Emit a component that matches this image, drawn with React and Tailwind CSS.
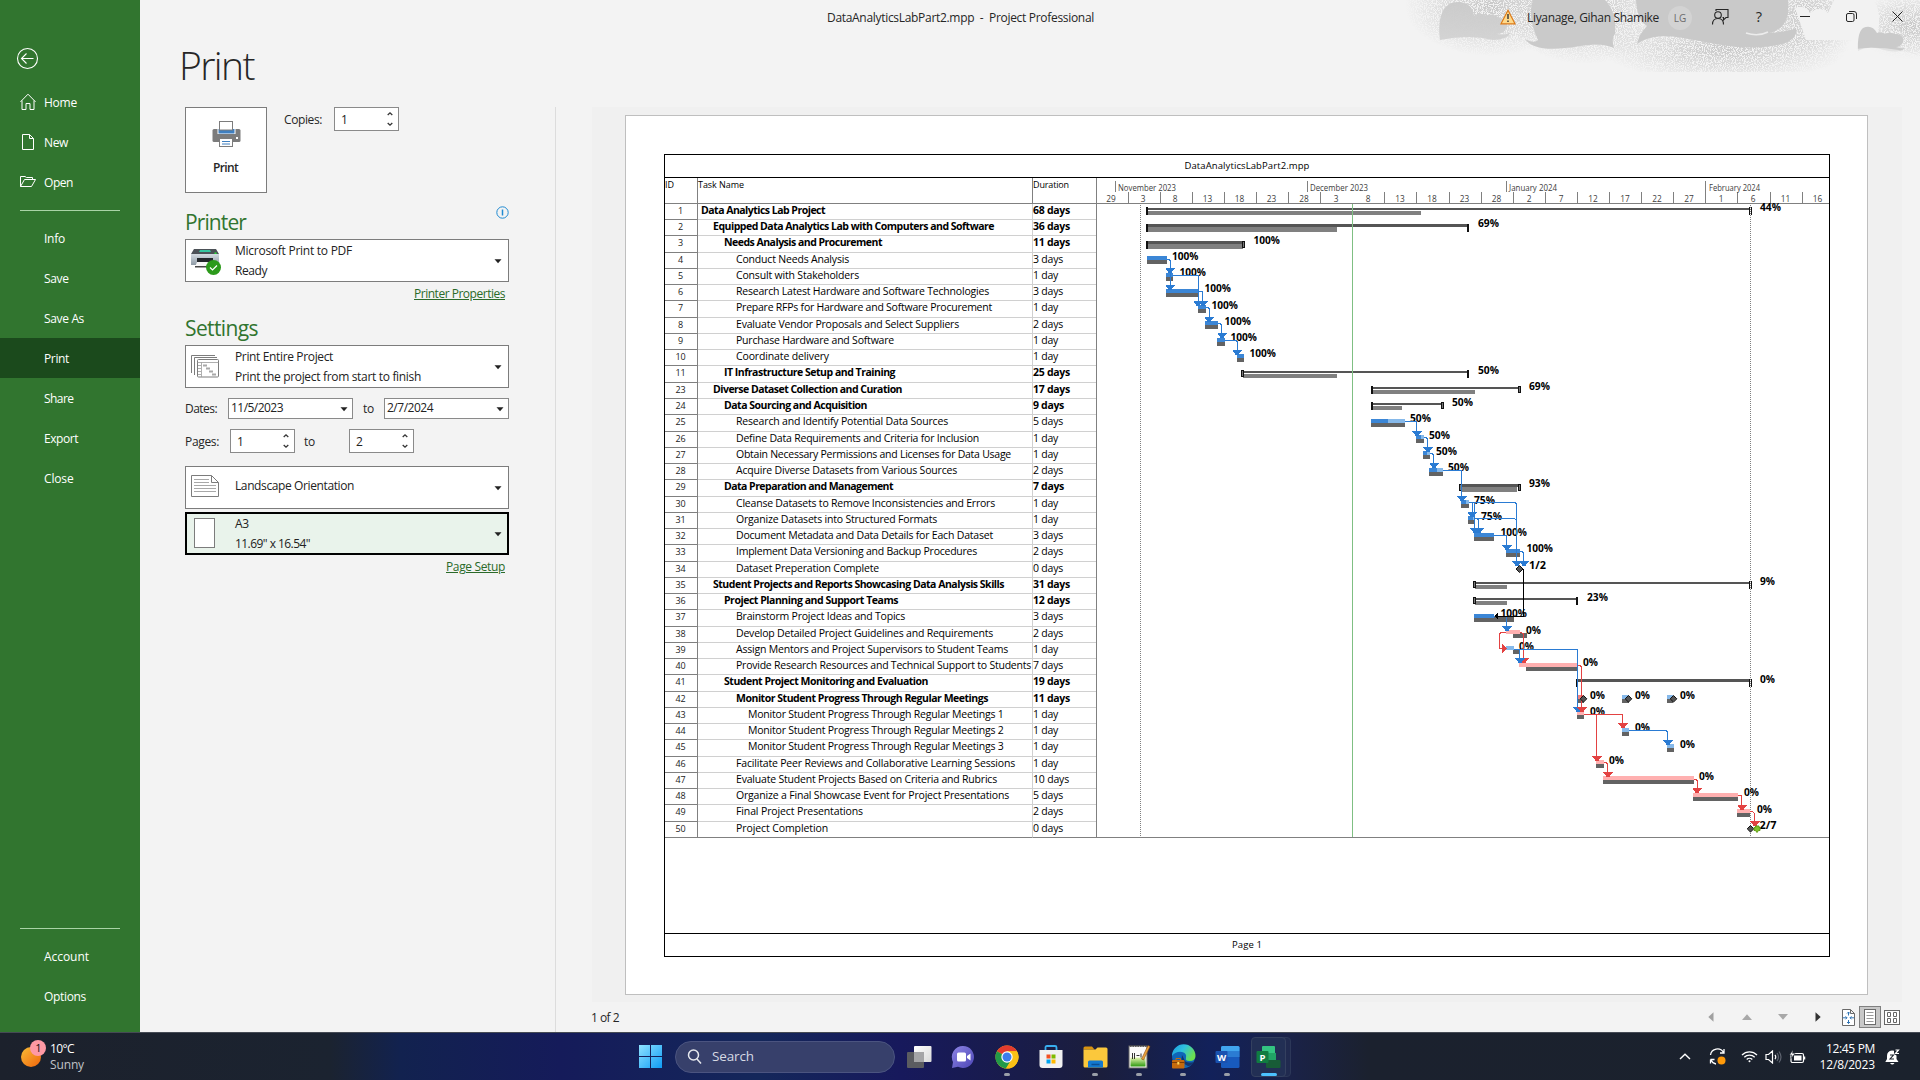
import { useLayoutEffect, useRef } from "react";

/* Text whose tracking is adjusted so that it fills a given width. */
function Fit({ w, className = "", children }) {
  const ref = useRef(null);
  useLayoutEffect(() => {
    const el = ref.current;
    el.style.letterSpacing = "0px";
    const natural = el.getBoundingClientRect().width;
    el.style.letterSpacing = `${(w - natural) / el.textContent.length}px`;
  }, [w, children]);
  return (
    <span ref={ref} className={`inline-block whitespace-pre ${className}`}>
      {children}
    </span>
  );
}

/* ---------- Sidebar ---------- */

const stroke = { fill: "none", stroke: "#fff", strokeWidth: 1 };

const HomeIcon = () => (
  <svg width="16" height="18" viewBox="0 0 16 18" {...stroke}>
    <path d="M.5 8.800 8 1.200l7.500 7.600M2 7.500v9h4v-6h4v6h4v-9" />
  </svg>
);
const NewIcon = () => (
  <svg width="16" height="18" viewBox="0 0 16 18" {...stroke}>
    <path d="M2.500 1.500h7l4 4v11h-11zM9.500 1.500v4h4" />
  </svg>
);
const OpenIcon = () => (
  <svg width="16" height="18" viewBox="0 0 16 18" {...stroke}>
    <path d="M.5 13.500v-10h4.500l1.500 1h6v2M.5 13.500h11l4-7h-11z" />
  </svg>
);

function SideItem({ label, w, icon, active }) {
  return (
    <div className={`flex h-10 items-center pl-5 ${active ? "bg-[#1b4a1c]" : ""}`}>
      <span className="flex w-6 items-center">{icon}</span>
      <Fit w={w} className="pt-px">{label}</Fit>
    </div>
  );
}

function Sidebar() {
  return (
    <aside className="flex w-[140px] flex-col bg-[#31752f] text-[12px] font-medium text-white">
      <div className="flex h-[82px] items-end pb-[12px] pl-[16px]">
        <svg width="23" height="23" viewBox="0 0 23 23" fill="none" stroke="#fff" strokeWidth="1.100">
          <circle cx="11.500" cy="11.500" r="10" />
          <path d="M17.500 11.500h-12M10.500 6.500l-5 5 5 5" />
        </svg>
      </div>
      <SideItem label="Home" w={33} icon={<HomeIcon />} />
      <SideItem label="New" w={24} icon={<NewIcon />} />
      <SideItem label="Open" w={29} icon={<OpenIcon />} />
      <div className="mx-5 mt-2 mb-[7px] h-px bg-[#a9d3a6]" />
      <SideItem label="Info" w={21} />
      <SideItem label="Save" w={24.5} />
      <SideItem label="Save As" w={40} />
      <SideItem label="Print" w={25} active />
      <SideItem label="Share" w={29.5} />
      <SideItem label="Export" w={34} />
      <SideItem label="Close" w={29.5} />
      <div className="mx-5 mt-auto mb-[7px] h-px bg-[#a9d3a6]" />
      <SideItem label="Account" w={45} />
      <SideItem label="Options" w={42} />
      <div className="h-[16px]" />
    </aside>
  );
}

/* ---------- Title bar ---------- */

function CloudArt() {
  return (
    <svg className="absolute top-0 right-0" width="520" height="72" viewBox="0 0 520 72">
      <defs>
        <filter id="grain" x="0" y="0" width="100%" height="100%" colorInterpolationFilters="sRGB">
          <feTurbulence type="fractalNoise" baseFrequency="0.9" numOctaves="2" seed="4" result="n" />
          <feColorMatrix in="n" type="matrix" values="0 0 0 0 .76  0 0 0 0 .76  0 0 0 0 .76  0 0 0 -7 4.2" result="d" />
          <feComposite in="d" in2="SourceGraphic" operator="in" />
        </filter>
        <radialGradient id="haze">
          <stop offset="0" stopColor="#000" stopOpacity=".9" />
          <stop offset=".55" stopColor="#000" stopOpacity=".45" />
          <stop offset="1" stopColor="#000" stopOpacity="0" />
        </radialGradient>
        <linearGradient id="cloud" x1="0" y1="0" x2="0" y2="1">
          <stop offset="0" stopColor="#cacaca" />
          <stop offset="1" stopColor="#d2d2d2" />
        </linearGradient>
      </defs>
      <g filter="url(#grain)">
        <rect width="520" height="72" fill="none" />
        <ellipse cx="90" cy="6" rx="85" ry="50" fill="url(#haze)" />
        <ellipse cx="185" cy="12" rx="80" ry="52" fill="url(#haze)" />
        <ellipse cx="325" cy="48" rx="125" ry="34" fill="url(#haze)" />
        <ellipse cx="405" cy="14" rx="60" ry="44" fill="url(#haze)" />
        <ellipse cx="512" cy="26" rx="60" ry="34" fill="url(#haze)" />
      </g>
      <path d="M395 8q10-4 15 5q10-8 18 0l6-13h40q8 14 4 32l-22 8h-50z" fill="#f2f2f2" />
      <path d="M40 40C37 15 44 2 58 2q14 0 16 14q5-5 11 0q8-4 14 2q8 0 8 8q-2 8-10 8q8 2 14-2q-4 8-18 8q-24-6-53 0z" fill="url(#cloud)" opacity=".95" />
      <path d="M133 0h72q12 12 10 34q-4 4-1 14q-13-6-34-2q-45 8-55-7q9 5 13 1q-11-24-5-40z" fill="#cacaca" />
      <path d="M236 0h152v14q-3 15-18 19q17-1 26-5q2 8-8 14q-18 7-50 5c-45-4-76-20-101-3q2-10 10-18q-10-6-11-26z" fill="#c9c9c9" />
      <path d="M346 33q12 4 22-1" fill="none" stroke="#ececec" strokeWidth="1.500" />
      <path d="M458 51q-1-18 5-23q9-4 14 5q5-2 8 1q5-3 9 0q10-1 9 8q-2 5-7 5q5 2 9 1q-5 6-21 2q-15-5-26 1z" fill="#cacaca" />
      <path d="M438 71v-18q40-12 82 3v15z" fill="#f3f3f3" opacity=".6" />
    </svg>
  );
}

function TitleBar() {
  return (
    <div className="relative flex h-9 items-center text-[12px] text-[#262626]">
      <div className="w-[687px]" />
      <Fit w={267}>{"DataAnalyticsLabPart2.mpp  -  Project Professional"}</Fit>
      <div className="ml-auto flex items-center">
        <svg className="-mt-[2px]" width="16" height="16" viewBox="0 0 16 16">
          <path d="M8 1.300 15 14.800H1z" fill="#ffd98a" stroke="#dd7a16" strokeWidth="1.200" />
          <path d="M8 5v5M8 11.500v1.600" stroke="#333" strokeWidth="1.400" />
        </svg>
        <Fit w={132} className="ml-[11px]">Liyanage, Gihan Shamike</Fit>
        <span className="ml-[9px] flex h-6 w-6 items-center justify-center rounded-full bg-[#d3d3d3] text-[10px] text-[#6b6b6b]">LG</span>
        <svg className="-mt-[3px] ml-[19px]" width="18" height="17" viewBox="0 0 18 17" fill="none" stroke="#262626" strokeWidth="1.100">
          <path d="M5 3V1.500h12v8h-2l-2.500 2.500v-2.500h-1M1.500 16.500q0-6 5.500-6t5.500 6" />
          <circle cx="7" cy="7" r="3.300" />
        </svg>
        <span className="-mt-[2px] ml-[24px] w-[12px] text-center text-[14.500px]">?</span>
        <svg className="-mt-1 ml-[35px]" width="10" height="10" viewBox="0 0 10 10"><path d="M0 5.500h10" stroke="#262626" /></svg>
        <svg className="-mt-1 ml-[36px]" width="11" height="11" viewBox="0 0 11 11" fill="none" stroke="#262626">
          <rect x=".5" y="2.500" width="7.500" height="8" rx="1.500" />
          <path d="M3 .5h5q2.500 0 2.500 2.500v5" />
        </svg>
        <svg className="-mt-1 mr-[17px] ml-[35px]" width="11" height="11" viewBox="0 0 11 11"><path d="M.5.5l10 10M10.500.5l-10 10" stroke="#262626" /></svg>
      </div>
    </div>
  );
}

/* ---------- Print settings ---------- */

const Caret = ({ className = "" }) => (
  <svg className={className} width="8" height="5" viewBox="0 0 8 5"><path d="M.5.3h7L4 4.300z" fill="#222" /></svg>
);

function Spinner({ value }) {
  return (
    <div className="flex h-6 w-[65px] items-center justify-between border border-[#8a8a8a] bg-white pr-[5px] pl-[6px] text-[12px] text-[#222]">
      <span className="pt-px">{value}</span>
      <svg width="6" height="16" viewBox="0 0 6 16" fill="none" stroke="#333" strokeWidth="1.300">
        <path d="M.7 4 3 1.800l2.300 2.200M.7 12 3 14.200l2.300-2.200" />
      </svg>
    </div>
  );
}

function DateBox({ value, w }) {
  return (
    <div className="flex h-[21px] w-[125px] items-center justify-between border border-[#8a8a8a] bg-white pr-[4px] pl-[2px] text-[12px] text-[#222]">
      <Fit w={w} className="-mt-[2px]">{value}</Fit>
      <Caret className="mt-px" />
    </div>
  );
}

function Dropdown({ icon, lines, focused }) {
  return (
    <div
      className={`flex h-[43px] items-center text-[12px] text-[#222] ${
        focused ? "border-2 border-black bg-[#e9f3eb] pr-[5px] pl-[4px]" : "border border-[#7c7c7c] bg-white pr-[6px] pl-[5px]"
      }`}
    >
      <span className="flex w-[44px] items-center">{icon}</span>
      <span className={`flex flex-col items-start ${lines.length === 1 ? "-mt-[3px]" : ""}`}>
        {lines.map(([t, w]) => (
          <Fit key={t} w={w} className="h-5 leading-5">{t}</Fit>
        ))}
      </span>
      <Caret className="mt-[2px] ml-auto" />
    </div>
  );
}

const BigPrinter = () => (
  <svg width="29" height="26" viewBox="0 0 29 26">
    <rect x=".5" y="8" width="28" height="13" rx="1.500" fill="#7c7c7c" />
    <rect x="5.500" y="7" width="18" height="6" fill="#fff" />
    <rect x="6.500" y="8" width="16" height="4.500" fill="#3f7fbf" />
    <rect x="7.500" y=".5" width="13" height="8.500" fill="#fff" stroke="#7c7c7c" />
    <rect x="7.500" y="17.500" width="13" height="8" fill="#fff" stroke="#7c7c7c" />
    <path d="M10 20.500h8M10 23h8" stroke="#3f7fbf" />
    <rect x="24" y="16" width="2" height="2" fill="#fff" />
  </svg>
);

const DevicePrinter = () => (
  <svg width="31" height="28" viewBox="0 0 31 28">
    <defs>
      <linearGradient id="dp" x1="0" y1="0" x2="0" y2="1">
        <stop offset="0" stopColor="#d5dce2" />
        <stop offset="1" stopColor="#8e9aa5" />
      </linearGradient>
    </defs>
    <path d="M3 2h22l3 5H0z" fill="#4c5157" />
    <path d="M9 3h10l1 2H8z" fill="#35c6a0" />
    <path d="M0 7h28v11H0z" fill="url(#dp)" />
    <path d="M6 11h16v6H6z" fill="#23272b" />
    <path d="M6 15h16l2 5H4z" fill="#f7f7f7" />
    <path d="M4 19h19v1.500H4z" fill="#444" />
    <rect x="23.500" y="5.500" width="2" height="1.500" fill="#2ce03a" />
    <circle cx="22.500" cy="20.500" r="7.500" fill="#2c9a1b" />
    <path d="M19 20.500l2.500 2.500 4.500-4.500" fill="none" stroke="#fff" strokeWidth="1.200" />
  </svg>
);

const ProjectPages = () => (
  <svg width="28" height="23" viewBox="0 0 28 23" fill="none" stroke="#7c7c7c">
    <path d="M.5 18V.5H24M3.500 20V2.500H26" />
    <rect x="6.500" y="4.500" width="21" height="17.500" rx="1" fill="#fff" />
    <path d="M6.500 7.500h21M10.500 7.500V22M7 10.500h3M7 13.500h3M7 16.500h3M7 19.500h3" strokeWidth=".8" stroke="#9a9a9a" />
    <path d="M12 10.500h4M15 13.500h4M18 16.500h4M21 19.500h4" stroke="#a8a8a8" strokeWidth="2" />
  </svg>
);

const LandscapePage = () => (
  <svg className="-mt-[4px]" width="28" height="22" viewBox="0 0 28 22" fill="none" stroke="#7c7c7c">
    <path d="M.5.5h20l7 7v14H.5zM20.500.5v7h7" fill="#fff" />
    <path d="M3 4.500h15M3 7.500h15M3 10.500h22M3 13.500h22M3 16.500h22" stroke="#a8a8a8" />
  </svg>
);

function Settings() {
  return (
    <section className="flex w-[416px] flex-col border-r border-[#dcdcdc] pr-[46px] pl-[45px] text-[12px] text-[#262626]">
      <div className="flex h-[86px]">
        <div className="flex w-[82px] flex-col items-center border border-[#7c7c7c] bg-white pt-[13px]">
          <BigPrinter />
          <Fit w={25} className="mt-[12px] mr-px font-semibold">Print</Fit>
        </div>
        <div className="ml-[17px] flex h-6 items-center">
          <Fit w={38} className="mr-[12px] pt-[2px]">Copies:</Fit>
          <Spinner value="1" />
        </div>
      </div>
      <div className="mt-[10px] flex h-9 items-center justify-between text-[#31752f]">
        <Fit w={61} className="pt-[3px] text-[21px]">Printer</Fit>
        <svg className="-mt-[18px]" width="13" height="13" viewBox="0 0 13 13" fill="none" stroke="#1f8ad2">
          <circle cx="6.500" cy="6.500" r="5.700" />
          <path d="M6.500 3.500v6" strokeWidth="1.500" />
        </svg>
      </div>
      <Dropdown icon={<DevicePrinter />} lines={[["Microsoft Print to PDF", 117], ["Ready", 32]]} />
      <div className="flex h-6 items-center justify-end pr-1 text-[#2b6a29] underline"><Fit w={91}>Printer Properties</Fit></div>
      <div className="flex h-[39px] items-center pt-[6px] text-[21px] text-[#31752f]"><Fit w={73}>Settings</Fit></div>
      <Dropdown icon={<ProjectPages />} lines={[["Print Entire Project", 98], ["Print the project from start to finish", 186]]} />
      <div className="mt-[10px] flex h-[21px] items-center">
        <Fit w={32} className="mr-[11px] pt-px">Dates:</Fit>
        <DateBox value="11/5/2023" w={52} />
        <Fit w={11} className="mx-[10px] pt-px">to</Fit>
        <DateBox value="2/7/2024" w={46} />
      </div>
      <div className="mt-[10px] flex h-6 items-center">
        <Fit w={34} className="mr-[11px] pt-[2px]">Pages:</Fit>
        <Spinner value="1" />
        <Fit w={11} className="mr-[34px] ml-[9px] pt-[2px]">to</Fit>
        <Spinner value="2" />
      </div>
      <div className="mt-[13px]"><Dropdown icon={<LandscapePage />} lines={[["Landscape Orientation", 119]]} /></div>
      <div className="mt-[3px]">
        <Dropdown
          focused
          icon={<span className="-mt-px ml-[3px] h-[30px] w-[21px] border border-[#7c7c7c] bg-white" />}
          lines={[["A3", 14], ['11.69" x 16.54"', 75]]}
        />
      </div>
      <div className="flex h-6 items-center justify-end pr-1 text-[#2b6a29] underline"><Fit w={59}>Page Setup</Fit></div>
    </section>
  );
}

/* ---------- Task table ---------- */

// [id, outline level, name, text width, duration, bold]
const TASKS = [
  [1, 0, "Data Analytics Lab Project", 124, "68 days", 1],
  [2, 1, "Equipped Data Analytics Lab with Computers and Software", 281, "36 days", 1],
  [3, 2, "Needs Analysis and Procurement", 158, "11 days", 1],
  [4, 3, "Conduct Needs Analysis", 113, "3 days"],
  [5, 3, "Consult with Stakeholders", 123, "1 day"],
  [6, 3, "Research Latest Hardware and Software Technologies", 253, "3 days"],
  [7, 3, "Prepare RFPs for Hardware and Software Procurement", 256, "1 day"],
  [8, 3, "Evaluate Vendor Proposals and Select Suppliers", 223, "2 days"],
  [9, 3, "Purchase Hardware and Software", 158, "1 day"],
  [10, 3, "Coordinate delivery", 93, "1 day"],
  [11, 2, "IT Infrastructure Setup and Training", 171, "25 days", 1],
  [23, 1, "Diverse Dataset Collection and Curation", 189, "17 days", 1],
  [24, 2, "Data Sourcing and Acquisition", 143, "9 days", 1],
  [25, 3, "Research and Identify Potential Data Sources", 212, "5 days"],
  [26, 3, "Define Data Requirements and Criteria for Inclusion", 243, "1 day"],
  [27, 3, "Obtain Necessary Permissions and Licenses for Data Usage", 275, "1 day"],
  [28, 3, "Acquire Diverse Datasets from Various Sources", 221, "2 days"],
  [29, 2, "Data Preparation and Management", 169, "7 days", 1],
  [30, 3, "Cleanse Datasets to Remove Inconsistencies and Errors", 259, "1 day"],
  [31, 3, "Organize Datasets into Structured Formats", 201, "1 day"],
  [32, 3, "Document Metadata and Data Details for Each Dataset", 257, "3 days"],
  [33, 3, "Implement Data Versioning and Backup Procedures", 241, "2 days"],
  [34, 3, "Dataset Preperation Complete", 143, "0 days"],
  [35, 1, "Student Projects and Reports Showcasing Data Analysis Skills", 291, "31 days", 1],
  [36, 2, "Project Planning and Support Teams", 174, "12 days", 1],
  [37, 3, "Brainstorm Project Ideas and Topics", 169, "3 days"],
  [38, 3, "Develop Detailed Project Guidelines and Requirements", 257, "2 days"],
  [39, 3, "Assign Mentors and Project Supervisors to Student Teams", 272, "1 day"],
  [40, 3, "Provide Research Resources and Technical Support to Students", 295, "7 days"],
  [41, 2, "Student Project Monitoring and Evaluation", 204, "19 days", 1],
  [42, 3, "Monitor Student Progress Through Regular Meetings", 252, "11 days", 1],
  [43, 4, "Monitor Student Progress Through Regular Meetings 1", 255.5, "1 day"],
  [44, 4, "Monitor Student Progress Through Regular Meetings 2", 255.5, "1 day"],
  [45, 4, "Monitor Student Progress Through Regular Meetings 3", 255.5, "1 day"],
  [46, 3, "Facilitate Peer Reviews and Collaborative Learning Sessions", 279, "1 day"],
  [47, 3, "Evaluate Student Projects Based on Criteria and Rubrics", 261, "10 days"],
  [48, 3, "Organize a Final Showcase Event for Project Presentations", 273, "5 days"],
  [49, 3, "Final Project Presentations", 127, "2 days"],
  [50, 3, "Project Completion", 92, "0 days"],
];

const INDENT = ["pl-[3px]", "pl-[15px]", "pl-[26px]", "pl-[38px]", "pl-[50px]"];
const rowLine = (i) => Math.floor(i * 16.2564 + 0.42);

function durationWidth(text, bold) {
  if (text.length === 5) return 25;
  if (text.length === 6) return bold ? 31 : 30;
  return bold ? 37 : 36;
}

function TaskTable() {
  return (
    <div className="flex w-[432px] flex-col border-r border-[#808080] text-black">
      <div className="flex h-[26px] border-b border-[#808080] text-[9px] leading-[13px]">
        <div className="w-[33px] border-r border-[#808080]"><Fit w={9}>ID</Fit></div>
        <div className="w-[335px] border-r border-[#808080]"><Fit w={46}>Task Name</Fit></div>
        <div><Fit w={36}>Duration</Fit></div>
      </div>
      {TASKS.map(([id, level, name, w, duration, bold], i) => (
        <div key={id} className="flex text-[10.500px]" style={{ height: rowLine(i + 1) - rowLine(i) }}>
          <div className="flex w-[33px] justify-center border-r border-b border-[#808080] pr-px text-[9px] leading-[13px] text-[#222]">
            <Fit w={String(id).length * 5}>{id}</Fit>
          </div>
          <div className={`w-[335px] border-r border-b border-[#d0d0d0] leading-[13.500px] ${INDENT[level]} ${bold ? "font-bold" : ""} ${i === 38 ? "border-b-[#808080]" : ""}`}>
            <Fit w={w}>{name}</Fit>
          </div>
          <div className={`flex-1 border-b border-[#d0d0d0] leading-[13.500px] ${bold ? "font-bold" : ""} ${i === 38 ? "border-b-[#808080]" : ""}`}>
            <Fit w={durationWidth(duration, bold)}>{duration}</Fit>
          </div>
        </div>
      ))}
    </div>
  );
}

/* ---------- Gantt chart (chart units are page pixels) ---------- */

const BLUE = "#3b86d6";
const LIGHT = "#86b9ea";
const PINK = "#ffb0b0";
const LINK = "#2a7bd3";
const RED = "#e34242";

const TICKS = [1128, 1160, 1192, 1224, 1256, 1288, 1320, 1384, 1416, 1449, 1481, 1513, 1545, 1577, 1609, 1641, 1673, 1705, 1737, 1770, 1802];
const DAYS = [
  [1111, 29], [1143, 3], [1175, 8], [1207.5, 13], [1239.5, 18], [1271.5, 23], [1304, 28], [1336, 3], [1368, 8], [1400, 13], [1432, 18],
  [1464.5, 23], [1496.5, 28], [1529, 2], [1561, 7], [1593, 12], [1625, 17], [1657, 22], [1689, 27], [1721, 1], [1753, 6], [1785.5, 11], [1817.5, 16],
];
const MONTHS = [[1115, "November 2023", 58, 1118], [1307, "December 2023", 58, 1310], [1506, "January 2024", 48, 1509], [1705, "February 2024", 51, 1709]];

// [x1, x2, y, line height, progress end, right cap style]
const SUMMARIES = [
  [1147, 1750, 208, 2, 1421, "open"],
  [1147, 1468, 224, 3, 1337, "solid"],
  [1147, 1244, 241, 3, 1243, "box"],
  [1243, 1468, 371, 2, 1337, "solid", 1],
  [1372, 1520, 387, 2, 1475, "box"],
  [1372, 1443, 403, 2, 1402, "box"],
  [1461, 1520, 484, 3, 1517, "box", 1],
  [1475, 1750, 582, 2, 1507, "open", 1],
  [1475, 1577, 598, 2, 1507, "solid", 1],
  [1577, 1750, 679, 3, 0, "open"],
];

// [x1, x2, y, split, first colour, second colour, shadow x1, shadow x2]
const BARS = [
  [1147, 1167, 256, 1167, BLUE],
  [1166, 1173, 273, 1173, BLUE],
  [1166, 1199, 289, 1199, BLUE],
  [1198, 1206, 305, 1206, BLUE],
  [1205, 1218, 321, 1218, BLUE],
  [1217, 1225, 338, 1225, BLUE],
  [1237, 1244, 354, 1244, BLUE],
  [1371, 1405, 419, 1388, BLUE, LIGHT],
  [1416, 1424, 435, 1421, BLUE, LIGHT],
  [1423, 1430, 451, 1427, BLUE, LIGHT],
  [1429, 1443, 468, 1437, BLUE, LIGHT],
  [1461, 1469, 500, 1466, BLUE, LIGHT],
  [1468, 1474, 516, 1473, BLUE, LIGHT],
  [1474, 1494, 533, 1494, BLUE],
  [1506, 1520, 549, 1520, BLUE],
  [1474, 1494, 614, 1494, BLUE, BLUE, 1474, 1514],
  [1506, 1520, 630, 1520, PINK, PINK, 1513, 1527],
  [1506, 1514, 646, 1514, LIGHT, LIGHT, 1513, 1520],
  [1519, 1577, 663, 1577, PINK, PINK, 1526, 1578],
  [1578, 1584, 695, 1584, "#f08080"],
  [1622, 1629, 695, 1629, LIGHT],
  [1667, 1673, 695, 1673, LIGHT],
  [1577, 1584, 711, 1584, PINK],
  [1622, 1629, 728, 1629, LIGHT],
  [1667, 1674, 744, 1674, LIGHT],
  [1596, 1604, 760, 1604, PINK],
  [1603, 1694, 776, 1694, PINK],
  [1693, 1738, 793, 1738, PINK],
  [1737, 1750, 809, 1750, PINK],
];

// [path, colour, arrow x, arrow top]
const LINKS = [
  ["M1167 259.500h2l1.500 1.500V285", LINK, 1170, 268],
  ["M1170.500 285v1", LINK, 1170, 285],
  ["M1173 275.500h25.500V301", LINK, 1198, 301],
  ["M1199 291.500h3.500V301", LINK, 1202.5, 301],
  ["M1206 307.500h2l1.500 1.500V317", LINK, 1209, 317],
  ["M1218 323.500h2l1.500 1.500V333", LINK, 1222, 333],
  ["M1225 340.500h11l1.500 1.500V350", LINK, 1237, 350],
  ["M1405 421.500h11.500V431", LINK, 1416.5, 431],
  ["M1424 437.500h2l1.500 1.500V447", LINK, 1427.5, 447],
  ["M1430 453.500h2l1.500 1.500V463", LINK, 1434, 463],
  ["M1443 470.500h18.500V496", LINK, 1461.5, 496],
  ["M1469 502.500h3.500V512", LINK, 1472, 512],
  ["M1474.500 503V528", LINK, 1474.5, 528],
  ["M1474 518.500h3l1.500 1.500V528", LINK, 1479, 528],
  ["M1469 502.500h46l1.500 1.500V561", LINK, 1516.5, 561],
  ["M1474 518.500h40.500l2 1.500", LINK, 1516.5, 561],
  ["M1494 535.500h12.500V545", LINK, 1506.5, 545],
  ["M1520 551.500h2l1.500 1.500V561", LINK, 1523.5, 561],
  ["M1494 616.500h12.500V626", LINK, 1506.5, 626],
  ["M1520 632.500h1.500l2 1.500V658", RED, 1523.5, 658],
  ["M1514 649.500h5.500V658", LINK, 1519.5, 658],
  ["M1514 649.500h63.500V707", LINK, 1577.5, 707],
  ["M1578 665.500h2l1.500 1.500V707", RED, 1581.5, 707],
  ["M1584 714.500h38.500V723", RED, 1622.5, 723],
  ["M1596.500 714.500V756", RED, 1596.5, 756],
  ["M1629 730.500h37l1.500 1.500V740", LINK, 1667.5, 740],
  ["M1604 762.500h2l1.500 1.500V772", RED, 1607.5, 772],
  ["M1694 779.500h2l1.500 1.500V788", RED, 1697, 788],
  ["M1738 795.500h3.500V805", RED, 1742, 805],
  ["M1750 811.500h2.500l1.500 1.500V821", RED, 1754.5, 821],
];

const LABELS = [
  [1760, 211, "44%"], [1478, 227, "69%"], [1253.5, 244, "100%"], [1172, 260, "100%"], [1179.5, 276, "100%"], [1204.5, 292, "100%"],
  [1211.5, 309, "100%"], [1224.5, 325, "100%"], [1230.5, 341, "100%"], [1249.5, 357, "100%"], [1478, 374, "50%"], [1529, 390, "69%"],
  [1452, 406, "50%"], [1410, 422, "50%"], [1429, 439, "50%"], [1436, 455, "50%"], [1448, 471, "50%"], [1529, 487, "93%"],
  [1474, 504, "75%"], [1481, 520, "75%"], [1500.5, 536, "100%"], [1526.5, 552, "100%"], [1529, 569, "1/2"], [1760, 585, "9%"],
  [1587, 601, "23%"], [1500.5, 617, "100%"], [1526, 634, "0%"], [1519, 650, "0%"], [1583, 666, "0%"], [1760, 683, "0%"],
  [1590, 699, "0%"], [1635, 699, "0%"], [1680, 699, "0%"], [1590, 715, "0%"], [1635, 731, "0%"], [1680, 748, "0%"],
  [1609, 764, "0%"], [1699, 780, "0%"], [1744, 796, "0%"], [1757, 813, "0%"], [1759.5, 829, "2/7"],
];
const LABEL_WIDTH = { 4: 26.5, 3: 21, 2: 15 };

function Cap({ x, y, kind }) {
  if (kind === "solid") return <rect x={x - 1} y={y} width="2" height="8" fill="#111" />;
  if (kind === "box") return <rect x={x - 1.5} y={y + 0.5} width="2" height="6" fill="#777" stroke="#111" />;
  return <path d={`M${x - 0.5} ${y}v8M${x + 1.5} ${y}v8`} fill="none" stroke="#111" />;
}

function Gantt() {
  return (
    <svg
      width="732"
      height="660"
      viewBox="1097 178 732 660"
      shapeRendering="crispEdges"
      className="block font-['Open_Sans','Noto_Sans',sans-serif]"
    >
      <g stroke="#808080">
        <path d="M1097 203.500H1829M1097 837.500H1829" />
        {TICKS.map((x) => <path key={x} d={`M${x + 0.5} 192V203`} />)}
        {MONTHS.map(([x]) => <path key={x} d={`M${x + 0.5} 181V192`} />)}
      </g>
      <g fontSize="8.300" fill="#3c3c3c">
        {MONTHS.map(([x, t, w, tx]) => <text key={x} x={tx} y="191" textLength={w} lengthAdjust="spacingAndGlyphs">{t}</text>)}
        {DAYS.map(([x, t]) => <text key={x} x={x} y="202" textAnchor="middle">{t}</text>)}
      </g>
      <path d="M1140.500 205V837M1750.500 205V837" stroke="#808080" strokeDasharray="1 1" />

      {SUMMARIES.map(([x1, x2, y, h, progress, cap, boxed]) => (
        <g key={y}>
          <rect x={x1} y={y} width={x2 - x1} height={h} fill="#555" />
          {progress > 0 && <rect x={x1} y={y + 3} width={progress - x1} height={h === 2 ? 4 : 4.6} fill="#808080" />}
          <Cap x={x1} y={y - (h === 2 ? 1 : 0)} kind={boxed ? "box" : "solid"} />
          <Cap x={x2} y={y - (h === 2 ? 1 : 0)} kind={cap} />
        </g>
      ))}

      {BARS.map(([x1, x2, y, split, a, b, s1, s2]) => (
        <g key={`${x1}-${y}`}>
          <rect x={s1 ?? x1} y={y + 3} width={(s2 ?? x2) - (s1 ?? x1)} height="5" fill="#636363" />
          <rect x={x1} y={y} width={x2 - x1} height={s1 ? 4 : 3.6} fill={b ?? a} />
          <rect x={x1} y={y} width={split - x1} height={s1 ? 4 : 3.6} fill={a} />
        </g>
      ))}

      <path d="M1352.500 204V837" stroke="#7fbf83" />

      <g fontSize="10" fontWeight="700" fill="#000">
        {LABELS.map(([x, y, t]) => (
          <text key={`${x}-${y}`} x={x} y={y} textLength={t.includes("/") ? 17 : LABEL_WIDTH[t.length]} lengthAdjust="spacingAndGlyphs">{t}</text>
        ))}
      </g>

      {LINKS.map(([d, color, ax, ay]) => (
        <g key={d}>
          <path d={d} fill="none" stroke={color} />
          <path d={`M${ax - 4.5} ${ay}h9.500v1l-2.750 2.500v1.500h-4v-1.500l-2.750-2.500z`} fill={color} />
        </g>
      ))}
      <path d="M1506 632.500h-5l-1.500 1.500v14.500h3" fill="none" stroke={RED} />
      <path d="M1502 644v9l5-4.500z" fill={RED} />
      <path d="M1520 569.500h3.500V616.500H1497" fill="none" stroke="#000" />
      <path d="M1498 612v8l-4-4z" fill="#000" />

      <g shapeRendering="auto" stroke="#111" strokeWidth="1">
        <path d="M1519.500 565.500l3.500 3.500-3.500 3.500-3.500-3.500z" fill="#555" />
        {[1583.5, 1628.5, 1673.5].map((x) => (
          <path key={x} d={`M${x} 695.500l3.300 3.300-3.300 3.300-3.300-3.300z`} fill="#555" />
        ))}
        <path d="M1750.500 825.500l3.300 3.300-3.300 3.300-3.300-3.300z" fill="#555" />
        <path d="M1755.500 826h3.500v1.500h1v3h-1.500l-1.500 2-1.500-2h-1.500v-3h1.500z" fill="#7ec02a" stroke="#5f9a14" />
      </g>
    </svg>
  );
}

function Preview() {
  return (
    <section className="ml-[36px] flex w-[1310px] flex-col text-[12px] text-[#262626]">
      <div className="h-[895px] bg-[#f0f0f0] pt-[8px] pl-[33px]">
        <div className="h-[880px] w-[1243px] border border-[#bfbfbf] bg-white pt-[38px] pl-[38px]">
          <div className="flex h-[803px] w-[1166px] flex-col border border-black text-[9.500px] text-black">
            <div className="flex h-[23px] items-center justify-center border-b border-black"><Fit w={125}>DataAnalyticsLabPart2.mpp</Fit></div>
            <div className="flex h-[660px]">
              <TaskTable />
              <Gantt />
            </div>
            <div className="flex-1" />
            <div className="flex h-[23px] items-center justify-center border-t border-black"><Fit w={30}>Page 1</Fit></div>
          </div>
        </div>
      </div>
      <div className="flex h-[30px] items-center">
        <Fit w={28} className="-ml-px pt-[2px]">1 of 2</Fit>
        <div className="ml-auto flex items-center">
          <svg width="6" height="10" viewBox="0 0 6 10"><path d="M5.500.2v9.600L.3 5z" fill="#a0a0a0" /></svg>
          <svg className="ml-[28px]" width="10" height="6" viewBox="0 0 10 6"><path d="M0 6h10L5 .3z" fill="#a8a8a8" /></svg>
          <svg className="ml-[26px]" width="10" height="6" viewBox="0 0 10 6"><path d="M0 0h10L5 5.700z" fill="#a8a8a8" /></svg>
          <svg className="ml-[27px]" width="6" height="10" viewBox="0 0 6 10"><path d="M.5.2v9.600L5.700 5z" fill="#333" /></svg>
          <svg className="ml-[21px]" width="13" height="17" viewBox="0 0 13 17" fill="none" stroke="#6a6a6a">
            <path d="M.5.500h8l4 4v12H.5zM8.500.5v4h4" fill="#fff" />
            <path d="M6.500 3v3.500M6.500 11v3.500M1 8.800h4M8 8.800h4M5 4.500l1.500-1.500L8 4.500M5 13l1.500 1.500L8 13M3.500 7.300 5 8.800l-1.500 1.500M9.500 7.300 8 8.800l1.500 1.500" stroke="#2f74b5" />
          </svg>
          <span className="ml-[4px] flex h-[22px] w-[22px] items-center justify-center border border-[#808080] bg-[#c8c8c8]">
            <svg width="12" height="16" viewBox="0 0 12 16" fill="none" stroke="#6a6a6a">
              <rect x=".5" y=".5" width="11" height="15" fill="#fff" />
              <path d="M2.500 3.500h7M2.500 6.500h7M2.500 9.500h7M2.500 12.500h7" stroke="#999" />
            </svg>
          </span>
          <svg className="mr-[2px] ml-[3px]" width="16" height="15" viewBox="0 0 16 15" fill="none" stroke="#666">
            <rect x=".5" y=".5" width="15" height="14" fill="#fff" />
            <path d="M3.500 2.500h3v4h-3zM9.500 2.500h3v4h-3zM3.500 8.500h3v4h-3zM9.500 8.500h3v4h-3z" />
          </svg>
        </div>
      </div>
    </section>
  );
}

/* ---------- Taskbar ---------- */

function AppSlot({ children, running }) {
  return (
    <span className="relative flex h-12 w-11 items-center justify-center">
      {children}
      {running && <span className="absolute bottom-[5px] left-[19px] h-[3px] w-[6px] rounded-full bg-[#9a9fa8]" />}
    </span>
  );
}

function TaskApps() {
  return (
    <div className="flex">
      <AppSlot>
        <svg width="25" height="24" viewBox="0 0 25 24">
          <defs>
            <linearGradient id="tv" x1="0" y1="0" x2="1" y2="1"><stop offset="0" stopColor="#fff" /><stop offset="1" stopColor="#d9d9d9" /></linearGradient>
          </defs>
          <rect x="0" y="7" width="17" height="16" rx="1" fill="#5b5c60" />
          <rect x="7" y="1" width="17.500" height="16" rx="1" fill="url(#tv)" />
          <rect x="7" y="7" width="10" height="10" fill="#a5a5a7" />
        </svg>
      </AppSlot>
      <AppSlot>
        <svg width="24" height="24" viewBox="0 0 24 24">
          <defs>
            <linearGradient id="chat" x1="0" y1="0" x2="1" y2="1"><stop offset="0" stopColor="#8f86e6" /><stop offset="1" stopColor="#4b45b5" /></linearGradient>
          </defs>
          <path d="M12 1a11 11 0 1 1-5 20.800L1 23l1-6A11 11 0 0 1 12 1z" fill="url(#chat)" />
          <rect x="6" y="7.500" width="9" height="9" rx="1.500" fill="#fff" />
          <path d="M16 11l3.500-2.500v7L16 13z" fill="#fff" />
        </svg>
      </AppSlot>
      <AppSlot running>
        <svg width="24" height="24" viewBox="0 0 24 24">
          <circle cx="12" cy="12" r="11.500" fill="#fbc116" />
          <path d="M12 12 2 6.200A11.500 11.500 0 0 1 22 6.200H12z" fill="#e33b2e" />
          <path d="M2 6.200A11.500 11.500 0 0 0 11 23.500l5.500-9L12 12z" fill="#229a48" />
          <path d="M11 23.500A11.500 11.500 0 0 0 22 6.200H12l4.500 8.300z" fill="#fbc116" />
          <circle cx="12" cy="12" r="5.700" fill="#fff" />
          <circle cx="12" cy="12" r="4.500" fill="#3b7ded" />
        </svg>
      </AppSlot>
      <AppSlot>
        <svg width="24" height="24" viewBox="0 0 24 24">
          <path d="M6.500 6V2.500Q6.500 1 8 1h8q1.500 0 1.500 1.500V6" fill="none" stroke="#38aef0" strokeWidth="1.800" />
          <path d="M.5 5h23v15q0 3-3 3h-17q-3 0-3-3z" fill="#f1f1f1" />
          <path d="M7.500 9.500h4v4h-4z" fill="#f25022" /><path d="M12.500 9.500h4v4h-4z" fill="#7fba00" />
          <path d="M7.500 14.500h4v4h-4z" fill="#00a4ef" /><path d="M12.500 14.500h4v4h-4z" fill="#ffb900" />
        </svg>
      </AppSlot>
      <AppSlot running>
        <svg width="25" height="24" viewBox="0 0 25 24">
          <path d="M.5 3q0-1.500 1.500-1.500h7l2.500 3H.5z" fill="#d9930f" />
          <path d="M.5 4.500h12l2-2H23q1.500 0 1.500 1.500v17q0 1.500-1.500 1.500H2q-1.500 0-1.500-1.500z" fill="#fbc83c" />
          <path d="M5 17q0-1.500 1.500-1.500h12Q20 15.500 20 17v5.500H5z" fill="#1379cf" />
          <path d="M8.500 19.500h8" stroke="#0b4f94" strokeWidth="1.500" />
        </svg>
      </AppSlot>
      <AppSlot running>
        <svg width="24" height="25" viewBox="0 0 24 25">
          <defs>
            <linearGradient id="npp" x1="0" y1="0" x2="0" y2="1"><stop offset="0" stopColor="#e6f7b0" /><stop offset="1" stopColor="#2f9a12" /></linearGradient>
          </defs>
          <rect x="2" y="2" width="18" height="22" fill="#fafafa" stroke="#666" />
          <path d="M3 2h17" stroke="#444" strokeWidth="1.500" strokeDasharray="1.500 1" />
          <path d="M3.500 13.500h15v9h-15z" fill="url(#npp)" />
          <path d="M5.500 9v6M7.500 9v6M9.500 11.500h3M14 9.500v4" stroke="#333" strokeWidth="1" />
          <path d="M14.500 15 21 1.500l2 1L16.500 16z" fill="#eaa33b" stroke="#8a4a12" strokeWidth=".6" />
        </svg>
      </AppSlot>
      <AppSlot running>
        <svg width="25" height="25" viewBox="0 0 25 25">
          <defs>
            <linearGradient id="edge" x1="0" y1="0" x2="1" y2=".5"><stop offset="0" stopColor="#1c9be0" /><stop offset=".5" stopColor="#2fc1df" /><stop offset="1" stopColor="#6be04f" /></linearGradient>
          </defs>
          <circle cx="12.500" cy="12.500" r="11.500" fill="#0f66b8" />
          <path d="M1 12a11.500 11.500 0 0 1 23.500 0q0 5-6 5-4.500 0-3.500-3 1-5-4-6-6-1-10 4z" fill="url(#edge)" />
          <path d="M11 11q-2 8 6 11 4 0 6-4-9 2-10-3z" fill="#12356f" />
          <rect x="1" y="16" width="12.500" height="8.500" rx="1" fill="#c56a0e" />
          <path d="M1 18.500h12.500" stroke="#7c3d04" /><path d="M5 16v-1.500h4.500V16" fill="none" stroke="#c56a0e" />
          <rect x="6.300" y="18" width="2" height="2.500" fill="#ffd65a" />
        </svg>
      </AppSlot>
      <AppSlot running>
        <svg width="25" height="24" viewBox="0 0 25 24">
          <rect x="6" y="1" width="18.500" height="22" rx="1.500" fill="#185abd" />
          <path d="M6 2.500Q6 1 7.500 1H23q1.500 0 1.500 1.500v4H6z" fill="#41a5ee" /><path d="M6 6.500h18.500V12H6z" fill="#2b7cd3" />
          <rect x=".5" y="6" width="12" height="12" rx="1" fill="#1a52b0" />
          <text x="6.500" y="15.500" fontSize="9.500" fontWeight="700" textAnchor="middle" fill="#fff">W</text>
        </svg>
      </AppSlot>
      <span className="relative flex h-12 w-11 items-center justify-center">
        <span className="absolute top-1 left-[6px] h-10 w-[36px] rounded-[4px] border border-[#2c3758] bg-[#2a3859]/40" />
        <span className="absolute top-1 left-[2px] flex h-10 w-[35px] items-center justify-center rounded-[4px] border border-[#34405f] bg-[#222f54]">
          <svg width="25" height="24" viewBox="0 0 25 24">
            <rect x="6" y="1" width="13" height="10" rx="1" fill="#33c481" />
            <rect x="10" y="8" width="10" height="9" fill="#21a366" />
            <rect x="10" y="15" width="14.500" height="8" rx="1" fill="#185c37" />
            <rect x=".5" y="6" width="12" height="12" rx="1" fill="#107c41" />
            <text x="6.500" y="15.500" fontSize="9.500" fontWeight="700" textAnchor="middle" fill="#fff">P</text>
          </svg>
        </span>
        <span className="absolute bottom-[5px] left-[12px] h-[3px] w-4 rounded-full bg-[#4cc2ff]" />
      </span>
    </div>
  );
}

function Taskbar() {
  return (
    <footer className="flex h-12 items-center border-t border-[#454a54] bg-[linear-gradient(90deg,#1c212c_0px,#1b2330_330px,#12224f_400px,#151b5a_560px,#14275a_760px,#17195c_900px,#191c4a_1020px,#1b1e3c_1100px,#12215a_1210px,#1a2248_1290px,#1b212e_1370px,#1b222d_1920px)] text-[12px] text-white">
      <div className="flex w-[635px] items-center pl-[19px]">
        <svg className="-mt-[3px]" width="28" height="30" viewBox="0 0 28 30">
          <defs>
            <linearGradient id="sun" x1="0" y1="0" x2="1" y2="1"><stop offset="0" stopColor="#f7bd37" /><stop offset="1" stopColor="#f0640c" /></linearGradient>
          </defs>
          <circle cx="12" cy="17" r="10" fill="url(#sun)" />
          <circle cx="19" cy="8" r="8" fill="#ff99a4" />
          <text x="19.500" y="12" fontSize="11" textAnchor="middle" fill="#111">1</text>
        </svg>
        <div className="ml-[3px] flex flex-col items-start leading-4">
          <Fit w={24}>10°C</Fit>
          <Fit w={34} className="text-[#c0c3c8]">Sunny</Fit>
        </div>
      </div>
      <svg className="ml-[4px]" width="23" height="23" viewBox="0 0 23 23">
        <defs>
          <linearGradient id="win" x1="0" y1="0" x2="1" y2="1"><stop offset="0" stopColor="#8fe3ff" /><stop offset="1" stopColor="#0f9bf5" /></linearGradient>
        </defs>
        <path d="M0 0h11v11H0zM12 0h11v11H12zM0 12h11v11H0zM12 12h11v11H12z" fill="url(#win)" />
      </svg>
      <div className="mr-[2px] ml-[13px] flex h-8 w-[220px] items-center rounded-full border border-[#4b5480] bg-[#37406b] pl-[11px] text-[13.500px] text-[#d6d9e3]">
        <svg width="15" height="15" viewBox="0 0 15 15" fill="none" stroke="#e6e8ee" strokeWidth="1.500">
          <circle cx="6.500" cy="6" r="5" /><path d="M10 10l4 4.500" />
        </svg>
        <Fit w={42} className="ml-[10px]">Search</Fit>
      </div>
      <TaskApps />
      <div className="ml-auto flex items-center">
        <svg width="12" height="7" viewBox="0 0 12 7" fill="none" stroke="#fff" strokeWidth="1.400"><path d="M1 6l5-4.800L11 6" /></svg>
        <svg className="ml-[18px]" width="17" height="17" viewBox="0 0 17 17" fill="none" stroke="#fff" strokeWidth="1.300">
          <path d="M1.500 7a7 7 0 0 1 13-2.500M15 1v4h-4M1.500 11.500v4M1.500 11.500h4M2 12a7 7 0 0 0 5 4" />
          <circle cx="12.500" cy="12.500" r="4" fill="#ff9a0a" stroke="none" />
        </svg>
        <svg className="ml-[15px]" width="17" height="13" viewBox="0 0 17 13" fill="none" stroke="#fff" strokeWidth="1.300">
          <path d="M1 5a10.500 10.500 0 0 1 15 0M3.300 7.300a7.300 7.300 0 0 1 10.400 0M5.700 9.500a4 4 0 0 1 5.600 0" />
          <circle cx="8.500" cy="11.300" r="1" fill="#fff" stroke="none" />
        </svg>
        <svg className="ml-[7px]" width="17" height="14" viewBox="0 0 17 14" fill="none" stroke="#fff" strokeWidth="1.200">
          <path d="M1 4.500h2.500L7.500 1v12L3.500 9.500H1zM10 4.800q1.500 2.200 0 4.400" />
          <path d="M12 3q3 4 0 8M14 1.500q4 5.500 0 11" stroke="#5d636f" />
        </svg>
        <svg className="ml-[7px]" width="17" height="14" viewBox="0 0 17 14">
          <rect x="2" y="3.500" width="12.500" height="9" rx="1.500" fill="none" stroke="#fff" strokeWidth="1.200" />
          <rect x="5" y="5.500" width="7.500" height="5" fill="#fff" /><path d="M15.500 6.500v3" stroke="#fff" strokeWidth="1.500" />
          <path d="M4 0 .5 5H3L2 8.500 6 3.500H3.500z" fill="#fff" stroke="#1b222d" strokeWidth=".5" />
        </svg>
        <div className="ml-[13px] flex w-[56px] flex-col items-end leading-4">
          <Fit w={49}>12:45 PM</Fit>
          <Fit w={55.5}>12/8/2023</Fit>
        </div>
        <svg className="mr-[20px] ml-[10px]" width="15" height="16" viewBox="0 0 15 16">
          <path d="M7 1.500Q2 2 2 7v3L.3 13h13.200L11.500 10V6.500L9 5V1.800zM5 14h4.500q-2.200 3-4.500 0" fill="#fff" />
          <path d="M5 6h3.500L5 10h4" stroke="#1b222d" strokeWidth="1.100" fill="none" />
          <path d="M10.500 1h3L10.500 4.500h3.500" stroke="#fff" strokeWidth="1.200" fill="none" />
        </svg>
      </div>
    </footer>
  );
}

export default function App() {
  return (
    <div className="flex h-[1080px] w-[1920px] flex-col overflow-hidden bg-[#f3f3f3] font-['Open_Sans','Noto_Sans',sans-serif]">
      <div className="flex h-[1032px]">
        <Sidebar />
        <main className="relative flex flex-1 flex-col">
          <CloudArt />
          <TitleBar />
          <h1 className="flex h-[71px] items-start pl-[39px] text-[39px] leading-[58px] font-light text-[#262626]">
            <Fit w={75}>Print</Fit>
          </h1>
          <div className="flex flex-1">
            <Settings />
            <Preview />
          </div>
        </main>
      </div>
      <Taskbar />
    </div>
  );
}
